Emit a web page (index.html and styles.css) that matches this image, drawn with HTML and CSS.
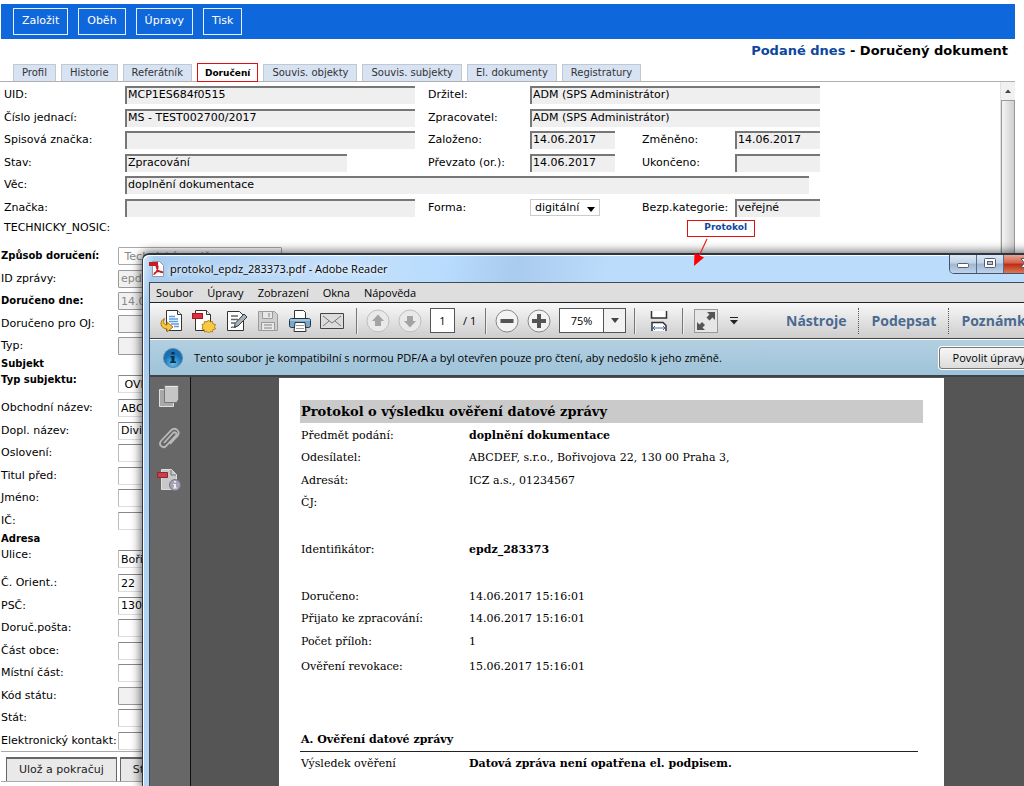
FILE: index.html
```html
<!DOCTYPE html>
<html lang="cs">
<head>
<meta charset="utf-8">
<title>Podané dnes - Doručený dokument</title>
<link rel="stylesheet" href="styles.css">
</head>
<body>
<div class="app">
  <header class="topbar">
    <button type="button">Založit</button>
    <button type="button">Oběh</button>
    <button type="button">Úpravy</button>
    <button type="button">Tisk</button>
  </header>
  <h1 class="title"><a href="#">Podané dnes</a> - Doručený dokument</h1>
  <nav class="tabs">
    <a href="#">Profil</a>
    <a href="#">Historie</a>
    <a href="#">Referátník</a>
    <a href="#" class="active">Doručení</a>
    <a href="#">Souvis. objekty</a>
    <a href="#">Souvis. subjekty</a>
    <a href="#">El. dokumenty</a>
    <a href="#">Registratury</a>
  </nav>
  <div class="panel">
    <form class="form" id="doc">
      <div class="head">
        <label for="uid">UID:</label><input class="sunk" id="uid" value="MCP1ES684f0515" readonly>
        <label for="drz">Držitel:</label><input class="sunk span3" id="drz" value="ADM (SPS Administrátor)" readonly>
        <label for="cj">Číslo jednací:</label><input class="sunk" id="cj" value="MS - TEST002700/2017" readonly>
        <label for="zpr">Zpracovatel:</label><input class="sunk span3" id="zpr" value="ADM (SPS Administrátor)" readonly>
        <label for="spz">Spisová značka:</label><input class="sunk" id="spz" readonly>
        <label for="zal">Založeno:</label><input class="sunk date" id="zal" value="14.06.2017" readonly>
        <label for="zme">Změněno:</label><input class="sunk date" id="zme" value="14.06.2017" readonly>
        <label for="stav">Stav:</label><input class="sunk short" id="stav" value="Zpracování" readonly>
        <label for="pre">Převzato (or.):</label><input class="sunk date" id="pre" value="14.06.2017" readonly>
        <label for="uko">Ukončeno:</label><input class="sunk date" id="uko" readonly>
        <label for="vec">Věc:</label><input class="sunk wide" id="vec" value="doplnění dokumentace" readonly>
        <label for="zna">Značka:</label><input class="sunk" id="zna" readonly>
        <label for="forma">Forma:</label>
        <span class="pick"><select id="forma"><option>digitální</option></select><svg width="8" height="5" viewBox="0 0 8 5"><path d="M0 0h8L4 5z" fill="#000"/></svg></span>
        <label for="bez">Bezp.kategorie:</label><input class="sunk date" id="bez" value="veřejné" readonly>
      </div>
      <div class="carrier">
        <span>TECHNICKY_NOSIC:</span>
        <a href="#" class="protocol">Protokol</a>
      </div>
      <div class="rows">
        <label class="strong" for="zp">Způsob doručení:</label><input class="dim" id="zp" value=" Technický nosič" disabled>
        <label for="idz">ID zprávy:</label><input class="off" id="idz" value="epdz_283373" disabled>
        <label class="strong" for="dd">Doručeno dne:</label><input class="off" id="dd" value="14.06.2017" disabled>
        <label for="oj">Doručeno pro OJ:</label><input class="off" id="oj" disabled>
        <label for="typ">Typ:</label><input class="off" id="typ" disabled>
      </div>
      <h2>Subjekt</h2>
      <div class="tall"><label class="strong" for="ts">Typ subjektu:</label><input id="ts" value=" OVM"></div>
      <div class="rows">
        <label for="on">Obchodní název:</label><input id="on" value="ABCDEF, s.r.o.">
        <label for="dn">Dopl. název:</label><input id="dn" value="Divize">
        <label for="os">Oslovení:</label><input id="os">
        <label for="tp">Titul před:</label><input id="tp">
        <label for="jm">Jméno:</label><input id="jm">
        <label for="ic">IČ:</label><input id="ic">
      </div>
      <h2>Adresa</h2>
      <div class="tall"><label for="ul">Ulice:</label><input id="ul" value="Bořivojova"></div>
      <div class="rows">
        <label for="co">Č. Orient.:</label><input id="co" value="22">
        <label for="psc">PSČ:</label><input id="psc" value="130 00">
        <label for="dp">Doruč.pošta:</label><input id="dp">
        <label for="ob">Část obce:</label><input id="ob">
        <label for="mc">Místní část:</label><input id="mc">
        <label for="ks">Kód státu:</label><input class="off" id="ks" disabled>
        <label for="st">Stát:</label><input id="st">
        <label for="ek">Elektronický kontakt:</label><input id="ek">
      </div>
    </form>
    <div class="scroll"><svg width="14" height="18" viewBox="0 0 14 18"><path d="M4 11l3-3.5 3 3.500z" fill="#444"/></svg><div class="thumb"></div></div>
  </div>
  <footer class="actions">
    <button type="submit" form="doc">Ulož a pokračuj</button>
    <button type="button">Storno</button>
  </footer>
</div>

<section class="window">
  <header class="caption">
    <svg width="16" height="16" viewBox="0 0 16 16"><path d="M3.500.5h7l4 4v11h-11z" fill="#fff" stroke="#999"/><path d="M0 1h9v4H0z" fill="#c41e25"/><path d="M4.500 13.500c2.500-1 4.500-4.500 4.300-8-.1-2-2-1.500-1.300.8.8 3 3.500 5 6.500 5.200M5 12.500c2.500-2.200 5.500-2.700 8.500-1.500" fill="none" stroke="#c41e25" stroke-width="1.500"/></svg>
    <span>protokol_epdz_283373.pdf - Adobe Reader</span>
    <div class="sysbtns">
      <button type="button" aria-label="Minimalizovat"><svg width="14" height="12" viewBox="0 0 14 12"><rect x="1.500" y="6.500" width="11" height="4" rx="1" fill="#fff" stroke="#555b6e"/></svg></button>
      <button type="button" aria-label="Maximalizovat"><svg width="14" height="12" viewBox="0 0 14 12"><rect x="1.500" y="1.500" width="11" height="9" rx="1" fill="#fff" stroke="#555b6e"/><rect x="4.500" y="4.500" width="5" height="3" fill="#b7c8dc" stroke="#555b6e"/></svg></button>
      <button type="button" class="close" aria-label="Zavřít"><svg width="14" height="12" viewBox="0 0 14 12"><path d="M2 1.500h3l2 2.500 2-2.500h3L8.700 6 12 10.500H9L7 8l-2 2.500H2L5.300 6z" fill="#fff" stroke="#555b6e"/></svg></button>
    </div>
  </header>
  <div class="frame">
    <nav class="menu">
      <a href="#">Soubor</a><a href="#">Úpravy</a><a href="#">Zobrazení</a><a href="#">Okna</a><a href="#">Nápověda</a>
    </nav>
    <div class="toolbar">
      <button type="button" aria-label="Otevřít"><svg width="24" height="24" viewBox="0 0 24 24"><path d="M6.500 1.500h11l4 4v16h-15z" fill="#fff" stroke="#333"/><path d="M17.500 1.500v4h4" fill="#eee" stroke="#333"/><path d="M9 7.500h6M9 10h9M9 12.500h9M11 15h8M14 17.500h5" stroke="#5b9be0" stroke-width="1.500"/><path d="M4.500 9.500C-1 12 0 19.500 7 20v3l6-5-6-5v3c-3 0-4.500-2.500-2.500-6.500z" fill="#f6c544" stroke="#a8740b"/></svg></button>
      <button type="button" aria-label="Vytvořit PDF"><svg width="24" height="24" viewBox="0 0 24 24"><path d="M3.500 1.500h11l4 4v16h-15z" fill="#fff" stroke="#333"/><path d="M14.500 1.500v4h4" fill="#eee" stroke="#333"/><rect x=".5" y="4.500" width="10" height="5" fill="#dc2f3c" stroke="#a41822"/><path d="M16.500 11l1.500 2 2.500-.6.300 2.500 2.700.6-1 2.300 1 2.200-2.700.7-.3 2.300-2.500-.5-1.500 1.500-1.500-1.500-2.500.5-.3-2.300-2.200-.7.800-2.200-.8-2.300 2.200-.6.300-2.500 2.500.6z" fill="#f8c945" stroke="#bb8316"/></svg></button>
      <button type="button" aria-label="Podepsat"><svg width="24" height="24" viewBox="0 0 24 24"><path d="M3.500 2.500h12l4 4v15h-16z" fill="#fff" stroke="#333"/><path d="M7 7h7M7 10.500h7M7 14h4" stroke="#666" stroke-width="1.500"/><path d="M20 5l3 3-9 9-3.500 1 .7-3.700zM7 18.500c2-1.500 3 1 5-.5" fill="#a9b3bd" stroke="#2f3b45"/></svg></button>
      <button type="button" aria-label="Uložit"><svg width="24" height="24" viewBox="0 0 24 24"><path d="M2.500 2.500h16l3 3v16h-19z" fill="#cfcfcf" stroke="#9a9a9a"/><path d="M6.500 2.500h10v7h-10zM5.500 13.500h13v8h-13z" fill="#e8e8e8" stroke="#9a9a9a"/><path d="M13 4v4M8 16h8M8 19h8" stroke="#a5a5a5" stroke-width="1.500"/></svg></button>
      <button type="button" aria-label="Tisk"><svg width="24" height="24" viewBox="0 0 24 24"><path d="M6.500 9.500v-8h9l2 2v6" fill="#fff" stroke="#333"/><rect x="1.500" y="9.500" width="21" height="9" rx="2" fill="#78a8cc" stroke="#234"/><path d="M2 11h20" stroke="#c5dff0"/><path d="M7 13.500h10l1 9H6z" fill="#fff" stroke="#333"/><path d="M8 16.500h8M8 19.500h8" stroke="#999"/></svg></button>
      <button type="button" class="mail" aria-label="E-mail"><svg width="24" height="24" viewBox="0 0 24 24"><path d="M.5 4.500h23v15H.5z" fill="#dcdcdc" stroke="#444"/><path d="M3 7l9 7 9-7M3 17l6-5M21 17l-6-5" fill="none" stroke="#777"/></svg></button>
      <i class="sep"></i>
      <button type="button" aria-label="Předchozí strana"><svg width="24" height="24" viewBox="0 0 24 24"><circle cx="12" cy="12" r="11" fill="#e9e9e9" stroke="#bdbdbd"/><path d="M12 5.500l6 6.500h-3v5H9v-5H6z" fill="#a3a3a3"/></svg></button>
      <button type="button" aria-label="Další strana"><svg width="24" height="24" viewBox="0 0 24 24"><circle cx="12" cy="12" r="11" fill="#e9e9e9" stroke="#bdbdbd"/><path d="M12 18.500L6 12h3V7h6v5h3z" fill="#a3a3a3"/></svg></button>
      <input class="pageno" value="1" aria-label="Strana"><span class="pages">/ 1</span>
      <i class="sep"></i>
      <button type="button" aria-label="Zmenšit"><svg width="24" height="24" viewBox="0 0 24 24"><circle cx="12" cy="12" r="11" fill="#f3f3f3" stroke="#888"/><path d="M5.500 10h13v4h-13z" fill="#555"/></svg></button>
      <button type="button" aria-label="Zvětšit"><svg width="24" height="24" viewBox="0 0 24 24"><circle cx="12" cy="12" r="11" fill="#f3f3f3" stroke="#888"/><path d="M10 5h4v5h5v4h-5v5h-4v-5H5v-4h5z" fill="#555"/></svg></button>
      <span class="zoom"><input value="75%" aria-label="Lupa"><button type="button" aria-label="Vybrat lupu"><svg width="8" height="5" viewBox="0 0 8 5"><path d="M0 0h8L4 5z" fill="#444"/></svg></button></span>
      <i class="sep"></i>
      <button type="button" class="fit" aria-label="Na šířku"><svg width="24" height="24" viewBox="0 0 24 24"><path d="M4.500 2v7h15V2" fill="#fff" stroke="#333" stroke-width="1.500"/><path d="M5 22v-8.500h11l3 3V22" fill="#fff" stroke="#333" stroke-width="1.500"/><path d="M6 19h12M8 17l-2 2 2 2M16 17l2 2-2 2" fill="none" stroke="#4668a8"/></svg></button>
      <i class="sep"></i>
      <button type="button" class="full" aria-label="Celá obrazovka"><svg width="24" height="24" viewBox="0 0 24 24"><rect x=".5" y=".5" width="23" height="23" fill="#e6e6e6" stroke="#999"/><path d="M13 3h8v8l-2.500-2.500-3 3-3-3 3-3zM3 21v-8l2.500 2.500L8 13l3 3-2.500 2.500L11 21z" fill="#555"/></svg></button>
      <button type="button" class="more" aria-label="Další nástroje"><svg width="8" height="8" viewBox="0 0 8 8"><path d="M0 .5h8" stroke="#222"/><path d="M0 3h8L4 7.500z" fill="#222"/></svg></button>
      <nav class="panes"><a href="#">Nástroje</a><a href="#">Podepsat</a><a href="#">Poznámky</a></nav>
    </div>
    <div class="info">
      <svg width="20" height="20" viewBox="0 0 20 20"><defs><radialGradient id="g" cy=".8"><stop offset="0" stop-color="#5cc0f0"/><stop offset="1" stop-color="#1a6fb2"/></radialGradient></defs><circle cx="10" cy="10" r="9.500" fill="url(#g)" stroke="#5b89ad"/><path d="M8.500 4h3v2.500h-3zM7.500 8h4v5.500h1.500V15h-6v-1.500h1.500v-4h-1z" fill="#08304f"/></svg>
      <span>Tento soubor je kompatibilní s normou PDF/A a byl otevřen pouze pro čtení, aby nedošlo k jeho změně.</span>
      <button type="button">Povolit úpravy</button>
    </div>
    <div class="viewer">
      <aside class="side">
        <button type="button" aria-label="Miniatury"><svg width="24" height="24" viewBox="0 0 24 24"><path d="M2.500 5.500h14v17h-14z" fill="#a9a9a9" stroke="#e0e0e0"/><path d="M7.500 1.500h14v14l-2 3h-12z" fill="#c6c6c6" stroke="#777"/><path d="M8.500 2.500h12" stroke="#e8e8e8"/></svg></button>
        <button type="button" aria-label="Přílohy"><svg width="24" height="24" viewBox="0 0 24 24"><path d="M7 17L16 7c2-2 4.500.5 2.800 2.500L9 20c-3 3-8-1-5-5L14 4.500c4-4 10 .5 6.500 5.500L13 18" fill="none" stroke="#b9b9b9" stroke-width="1.800"/></svg></button>
        <button type="button" aria-label="Standardy"><svg width="24" height="24" viewBox="0 0 24 24"><path d="M4.500 1.500h10l5 5v15h-15z" fill="#c8c8c8" stroke="#ddd"/><path d="M14 2v5h5" fill="none" stroke="#777"/><path d="M.5 4.500h10v5H.5z" fill="#c9404a" stroke="#93252e"/><circle cx="18" cy="17" r="5.500" fill="#a3a3b5" stroke="#77778c"/><path d="M17 13h2v1.500h-2zM16 16h3v3.500h1v1h-4v-1h1v-2.500h-1z" fill="#eee"/></svg></button>
      </aside>
      <article class="page">
        <h3>Protokol o výsledku ověření datové zprávy</h3>
        <dl>
          <dt>Předmět podání:</dt><dd><b>doplnění dokumentace</b></dd>
          <dt>Odesílatel:</dt><dd>ABCDEF, s.r.o., Bořivojova 22, 130 00 Praha 3,</dd>
          <dt>Adresát:</dt><dd>ICZ a.s., 01234567</dd>
          <dt>ČJ:</dt><dd></dd>
        </dl>
        <dl>
          <dt>Identifikátor:</dt><dd><b>epdz_283373</b></dd>
        </dl>
        <dl>
          <dt>Doručeno:</dt><dd>14.06.2017 15:16:01</dd>
          <dt>Přijato ke zpracování:</dt><dd>14.06.2017 15:16:01</dd>
          <dt>Počet příloh:</dt><dd>1</dd>
          <dt class="late">Ověření revokace:</dt><dd class="late">15.06.2017 15:16:01</dd>
        </dl>
        <h4>A. Ověření datové zprávy</h4>
        <dl>
          <dt>Výsledek ověření</dt><dd><b>Datová zpráva není opatřena el. podpisem.</b></dd>
        </dl>
      </article>
    </div>
  </div>
</section>
<svg class="arrow" width="18" height="30" viewBox="0 0 18 30"><path d="M15 1L7 18" stroke="#e8201c" stroke-width="1.200"/><path d="M2 28L2.500 15l9.500 4.500z" fill="#f00"/></svg>
</body>
</html>
```
FILE: styles.css
```css
* { box-sizing: border-box; }
body {
  margin: 0;
  height: 100vh;
  overflow: hidden;
  position: relative;
  background: #fff;
  color: #000;
  font: 11px/14px "DejaVu Sans", sans-serif;
}
input, button, select { font: inherit; color: inherit; margin: 0; min-width: 0; }
a { color: inherit; text-decoration: none; }
svg { display: block; flex: none; }

.app { height: 100%; display: flex; flex-direction: column; padding-top: 4px; }
.topbar {
  display: flex; gap: 10px; align-items: center;
  margin: 0 9px 0 1px; padding: 4px 12px;
  background: #0f68db;
}
.topbar button {
  height: 27px; padding: 0 8px 2px;
  border: 1px solid #e6f0ff; background: none; color: #fff;
}
.title { margin: 4px 16px 0; font-size: 13px; line-height: 16px; text-align: right; }
.title a { color: #0d47a1; }
.tabs {
  display: flex; gap: 5px; align-items: flex-end;
  margin: 4px 9px 0 0; padding-left: 13px; height: 19px;
  border-bottom: 1px solid #b0b0b0;
}
.tabs a {
  height: 17px; padding: 0 8px; line-height: 16px; font-size: 10px;
  background: #d7e2f3; border: 1px solid #c3c8d0; border-bottom: 0; color: #333;
}
.tabs .active {
  height: 19px; padding: 0 7px; line-height: 18px; margin-bottom: -1px; font-size: 9px;
  border: 1px solid #e01010; background: #fff; color: #000; font-weight: bold;
}
.panel { display: flex; flex: 1; min-height: 0; margin-right: 9px; }
.form { flex: 1; min-width: 0; overflow: hidden; }
.head {
  display: grid;
  grid-template-columns: 121px 303px 102px 112px 93px 85px;
  grid-auto-rows: 22px 23px;
  align-items: center;
  padding: 2px 0 0 4px;
}
.head label { white-space: nowrap; }
.sunk {
  height: 18px; width: 290px; padding: 0 1px 3px;
  border: solid #777; border-width: 2px 0 0 2px; background: #efefef;
}
.span3 { grid-column: span 3; }
.short { width: 222px; }
.wide { grid-column: span 5; width: 684px; }
.date { width: 85px; }
.pick { position: relative; width: 70px; height: 17px; border: 1px solid #ccc; }
.pick select {
  appearance: none; width: 100%; height: 100%; padding: 0 4px;
  border: 0; background: #fff; line-height: 14px;
}
.pick svg { position: absolute; right: 4px; top: 7px; }
.carrier { display: flex; gap: 577px; align-items: center; height: 26px; padding: 0 4px 8px; }
.protocol {
  height: 17px; padding: 0 7px 0 16px; border: 1px solid #e01010;
  color: #0d47a1; font-size: 9px; font-weight: bold; line-height: 13px;
}
.rows {
  display: grid; grid-template-columns: 117px 164px;
  grid-auto-rows: 22px 23px; align-items: center; padding-left: 1px;
}
.rows label, .tall label { white-space: nowrap; }
.rows input, .tall input {
  height: 18px; padding: 0 2px; border: 1px solid #ddd; border-top-color: #888;
  border-left-color: #bbb; border-radius: 1px; background: #fff;
}
.rows .dim { color: #888; border-color: #aaa; }
.rows .off { color: #888; background: #f1f1f1; border-color: #999; }
.strong { font-size: 10px; font-weight: bold; }
.form h2 { margin: 0; padding-left: 1px; font-size: 10px; line-height: 13px; }
.tall {
  display: grid; grid-template-columns: 117px 164px; height: 27px;
  padding: 3px 0 0 1px; align-items: start;
}
.tall input { margin-top: 2px; }
.scroll { width: 15px; background: #f1f1f1; border-left: 1px solid #e2e2e2; display: flex; flex-direction: column; }
.thumb { flex: 1; border: 1px solid #999; background: linear-gradient(90deg, #f4f4f4, #cfcfcf); }
.actions {
  display: flex; gap: 3px; margin: 0 9px 4px 1px; padding: 5px 5px 0;
  border: solid #aaa; border-width: 1px 0;
}
.actions button {
  height: 24px; padding: 0 12px; border: 2px solid #666; border-width: 2px 1px 0;
  background: #e9e9e9; color: #222;
}

.window {
  position: absolute; left: 142px; top: 253px; right: -32px; bottom: 0;
  display: flex; flex-direction: column;
  border: solid #2a3644; border-width: 2px 1px 0; border-radius: 7px 7px 0 0;
  background: linear-gradient(100deg, #dcecfb 0, #a9cdf0 12px, #c4e0fb 200px, #b8dcfd 300px, #a9cbee 370px, #bcdcfb 460px);
  box-shadow: 0 0 10px 2px rgba(0, 0, 0, .55), inset 1px 1px 0 #fff;
  font: 11px/16px "Open Sans", sans-serif;
}
.caption { display: flex; gap: 5px; align-items: center; height: 27px; padding: 0 6px; }
.caption span { flex: 1; text-shadow: 0 0 6px #fff, 0 0 6px #fff; }
.sysbtns {
  display: flex; align-self: flex-start; border: 1px solid #44526a; border-top: 0;
  border-radius: 0 0 5px 5px; overflow: hidden;
}
.sysbtns button {
  width: 27px; height: 18px; padding: 0 0 2px; display: grid; place-items: center;
  border: 0; border-right: 1px solid #5b6c86;
  background: linear-gradient(#dbe8f6, #c0d3e8 45%, #9fb6d1 50%, #bed4ec);
}
.sysbtns .close { width: 44px; border: 0; background: linear-gradient(#e8a493, #d2614b 45%, #bb2b12 50%, #d97a56); }
.frame {
  flex: 1; min-height: 0; display: flex; flex-direction: column;
  margin: 0 6px; border: 1px solid #3e4a58; border-bottom: 0;
}
.menu { display: flex; gap: 14px; height: 20px; padding: 0 6px; align-items: center; background: #dedede; border-bottom: 1px solid #222; }
.toolbar {
  display: flex; gap: 8px; align-items: center; height: 36px; padding: 0 10px; flex: none;
  background: linear-gradient(#f8f8f8, #cdcdcd); border-bottom: 1px solid #444;
}
.toolbar > * { flex: none; }
.toolbar button { padding: 0; border: 0; background: none; }
.toolbar .mail { width: 28px; }
.sep { width: 2px; height: 26px; background: #777; border-right: 1px solid #eee; }
.pageno { width: 25px; height: 25px; padding: 0; border: 1px solid #555; text-align: center; background: #fff; }
.pages { width: 14px; white-space: nowrap; }
.zoom { display: flex; width: 67px; height: 25px; border: 1px solid #555; background: #fff; }
.zoom input { flex: 1; width: 0; padding: 0; border: 0; text-align: center; background: none; }
.toolbar .zoom button { width: 22px; display: grid; place-items: center; border-left: 1px solid #555; background: #f2f2f2; }
.toolbar .fit { width: 30px; display: grid; place-items: center; }
.toolbar .full { width: 28px; display: grid; place-items: center; }
.toolbar .more { width: 12px; display: grid; place-items: center; }
.panes { display: flex; margin-left: 26px; color: #4b6a91; font-size: 14px; font-weight: bold; }
.panes a { padding: 5px 12px; border-right: 1px dotted #555; }
.panes a:last-child { border: 0; }
.info {
  display: flex; align-items: center; height: 38px; padding: 0 9px 0 13px; gap: 11px; flex: none;
  border: solid; border-width: 1px 0 2px; border-color: #fff #555 #3e4347;
  background: linear-gradient(#b3cfe2, #9ec3d9);
}
.info span { flex: 1; white-space: nowrap; }
.info button {
  width: 100px; height: 22px; padding: 0; border: 1px solid #777; border-radius: 3px;
  background: linear-gradient(#f6f6f6, #dcdcdc); box-shadow: 0 0 0 1px #fff;
}
.viewer { flex: 1; min-height: 0; display: flex; background: #555; }
.side {
  width: 41px; flex: none; display: flex; flex-direction: column; gap: 18px;
  padding: 7px 0 0 7px; background: #676767; border-right: 1px solid #111;
}
.side button { width: 24px; height: 24px; padding: 0; border: 0; background: none; }
.page {
  flex: 1; margin: 1px 104px 0 88px; padding: 22px 21px 0; background: #fff;
  font: 11px/16px "DejaVu Serif", serif; overflow: hidden;
}
.page h3 { margin: 0 0 1px; padding-left: 1px; font-size: 13px; line-height: 23px; background: #cacaca; }
.page dl {
  display: grid; grid-template-columns: 168px 1fr; grid-auto-rows: 23px 22px;
  align-items: center; margin: 0 0 24px; padding-left: 1px;
}
.page dd { margin: 0; }
.page .late { padding-top: 6px; }
.page h4 { margin: 54px 5px 0 0; padding-left: 1px; font-size: 11px; line-height: 22px; border-bottom: 1px solid #222; }
.arrow { position: absolute; left: 692px; top: 238px; }
```
